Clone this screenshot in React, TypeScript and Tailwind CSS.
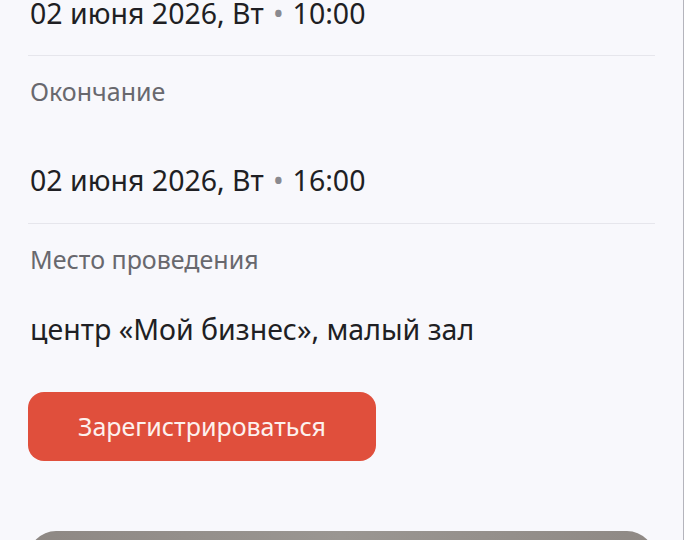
export default function App() {
    const font = { fontFamily: '"Noto Sans", "Open Sans", sans-serif' };

    return (
        <div className="h-[540px] w-[684px] overflow-hidden bg-[#f8f8fc] border-r border-[#b4b4bc]" style={font}>
            <div className="flex flex-col px-7">
                {/* Начало */}
                <div className="pl-[2px] text-[28.5px] leading-[26px] text-[#1f1f24]">
                    02 июня 2026, Вт<span className="mx-[9px] text-[#8a8a90]">•</span>10:00
                </div>
                <div className="mt-[29px] h-px bg-[#e6e6ec]" />

                {/* Окончание */}
                <div className="mt-[20px] pl-[2px] text-[25px] leading-[30px] text-[#68686e]">Окончание</div>
                <div className="mt-[54px] pl-[2px] text-[28.5px] leading-[40px] text-[#1f1f24]">
                    02 июня 2026, Вт<span className="mx-[9px] text-[#8a8a90]">•</span>16:00
                </div>
                <div className="mt-[23px] h-px bg-[#e6e6ec]" />

                {/* Место */}
                <div className="mt-[20px] pl-[2px] text-[25px] leading-[30px] text-[#68686e]">Место проведения</div>
                <div className="mt-[35px] pl-[2px] text-[28.5px] leading-[40px] text-[#1f1f24]">
                    центр «Мой бизнес», малый зал
                </div>

                <button className="mt-[43px] flex h-[69px] w-[348px] items-center justify-center rounded-[16px] bg-[#e04f3c] text-[25px] text-[#fdf1ee]">
                    Зарегистрироваться
                </button>

                <div className="mt-[70px] h-[200px] rounded-t-[28px] bg-gradient-to-r from-[#8e8884] via-[#9a9692] to-[#8f8985]" />
            </div>
        </div>
    );
}
